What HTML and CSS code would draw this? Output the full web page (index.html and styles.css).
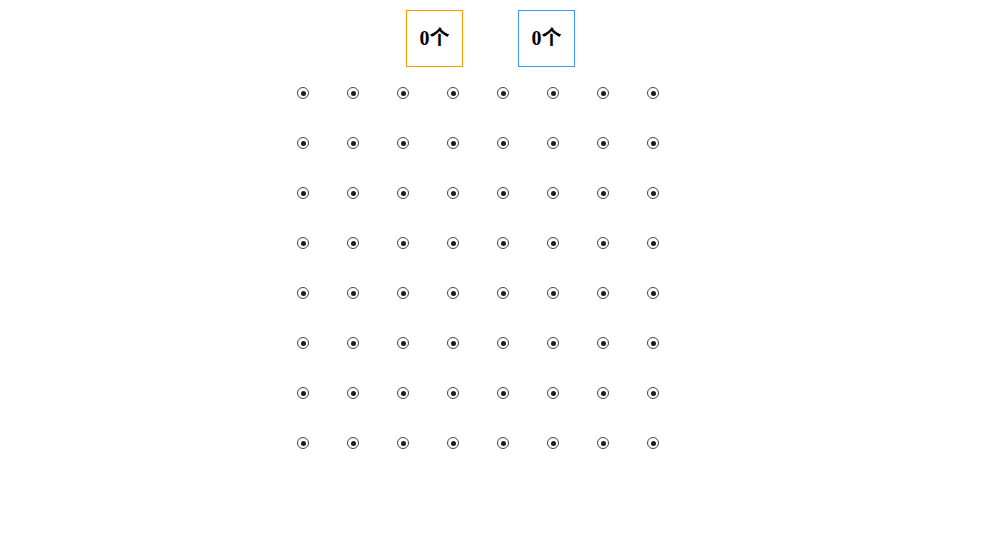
FILE: index.html
```html
<!DOCTYPE html>
<html>
<head>
<meta charset="utf-8">
<link rel="stylesheet" href="styles.css">
</head>
<body>
<div class="counters">
  <div class="counter counter-orange">0个</div>
  <div class="counter counter-blue">0个</div>
</div>
<div class="board">
  <span class="dot"></span><span class="dot"></span><span class="dot"></span><span class="dot"></span><span class="dot"></span><span class="dot"></span><span class="dot"></span><span class="dot"></span>
  <span class="dot"></span><span class="dot"></span><span class="dot"></span><span class="dot"></span><span class="dot"></span><span class="dot"></span><span class="dot"></span><span class="dot"></span>
  <span class="dot"></span><span class="dot"></span><span class="dot"></span><span class="dot"></span><span class="dot"></span><span class="dot"></span><span class="dot"></span><span class="dot"></span>
  <span class="dot"></span><span class="dot"></span><span class="dot"></span><span class="dot"></span><span class="dot"></span><span class="dot"></span><span class="dot"></span><span class="dot"></span>
  <span class="dot"></span><span class="dot"></span><span class="dot"></span><span class="dot"></span><span class="dot"></span><span class="dot"></span><span class="dot"></span><span class="dot"></span>
  <span class="dot"></span><span class="dot"></span><span class="dot"></span><span class="dot"></span><span class="dot"></span><span class="dot"></span><span class="dot"></span><span class="dot"></span>
  <span class="dot"></span><span class="dot"></span><span class="dot"></span><span class="dot"></span><span class="dot"></span><span class="dot"></span><span class="dot"></span><span class="dot"></span>
  <span class="dot"></span><span class="dot"></span><span class="dot"></span><span class="dot"></span><span class="dot"></span><span class="dot"></span><span class="dot"></span><span class="dot"></span>
</div>
</body>
</html>
```
FILE: styles.css
```css
html, body {
  margin: 0;
  padding: 0;
  background: #fff;
}
body {
  font-family: "Liberation Serif", "Noto Sans CJK SC", serif;
}
.counters {
  display: flex;
  gap: 55px;
  padding-top: 10px;
  margin-left: 406px;
}
.counter {
  box-sizing: border-box;
  width: 57px;
  height: 57px;
  padding-bottom: 4px;
  display: flex;
  align-items: center;
  justify-content: center;
  font-weight: bold;
  font-size: 20px;
  color: #000;
}
.counter-orange {
  border: 1px solid #ff9900;
}
.counter-blue {
  border: 1px solid #3d95ff;
}
.board {
  display: grid;
  grid-template-columns: repeat(8, 50px);
  grid-auto-rows: 50px;
  margin-left: 278px;
  margin-top: 1px;
  width: 400px;
}
.dot {
  box-sizing: border-box;
  width: 12px;
  height: 12px;
  margin: 19px 0 0 19px;
  border: 1.5px solid #444;
  border-radius: 50%;
  display: flex;
  align-items: center;
  justify-content: center;
}
.dot::after {
  content: "";
  width: 5px;
  height: 5px;
  border-radius: 50%;
  background: #1a1a1a;
}
```
